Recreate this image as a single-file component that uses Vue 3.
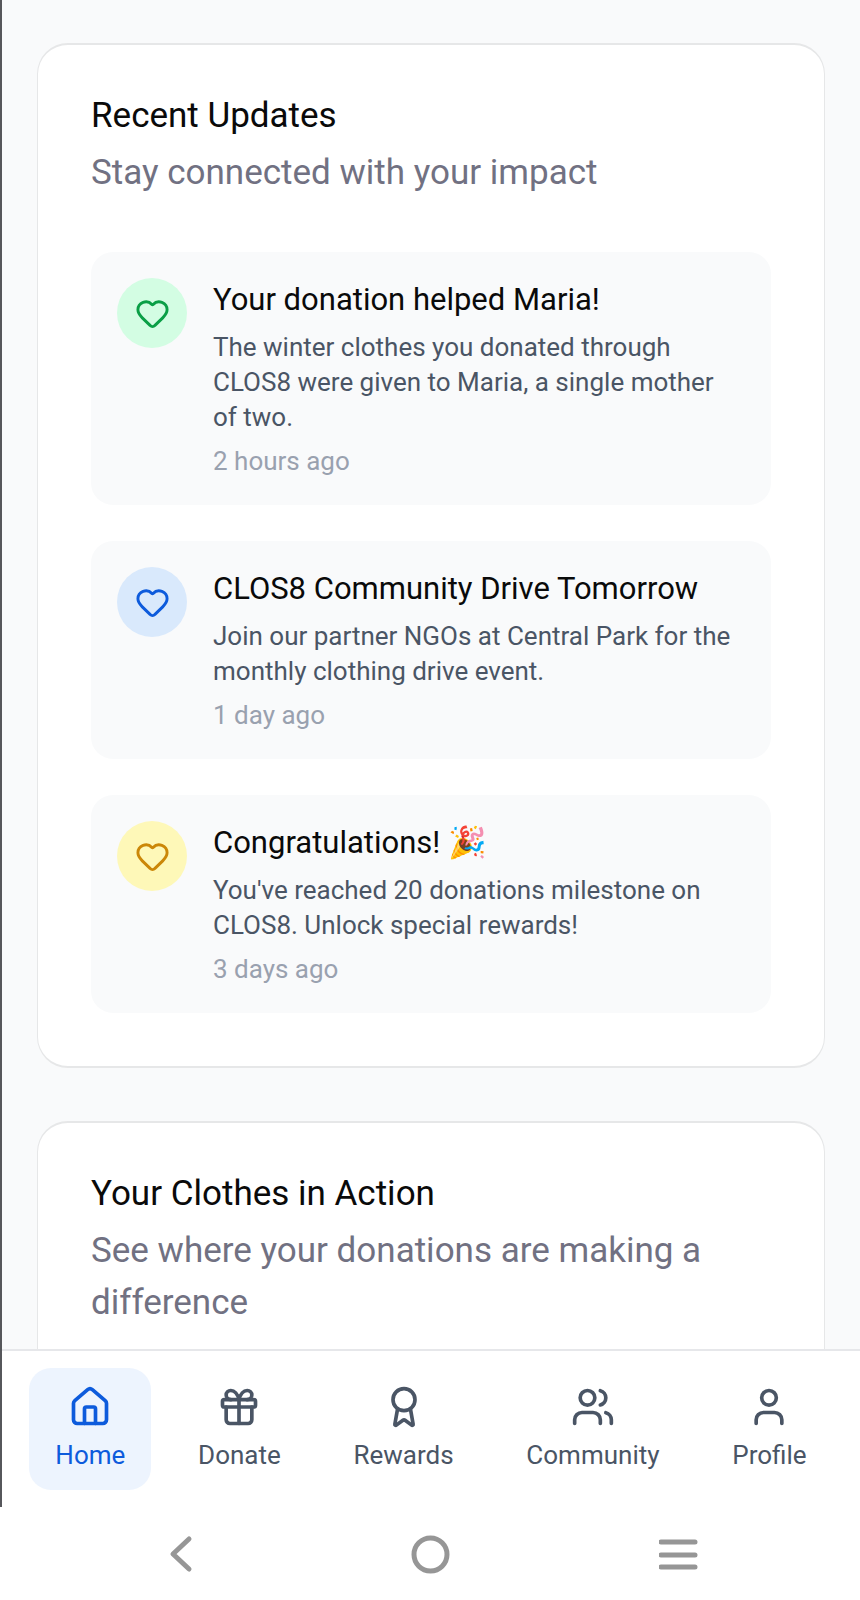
<script setup>
import { ref } from 'vue'

const updates = [
  {
    tone: 'green',
    title: 'Your donation helped Maria!',
    text: 'The winter clothes you donated through CLOS8 were given to Maria, a single mother of two.',
    time: '2 hours ago',
  },
  {
    tone: 'blue',
    title: 'CLOS8 Community Drive Tomorrow',
    text: 'Join our partner NGOs at Central Park for the monthly clothing drive event.',
    time: '1 day ago',
  },
  {
    tone: 'yellow',
    title: 'Congratulations! 🎉',
    text: "You've reached 20 donations milestone on CLOS8. Unlock special rewards!",
    time: '3 days ago',
  },
]

const tabs = [
  {
    label: 'Home',
    paths: [
      'M15 21v-8a1 1 0 0 0-1-1h-4a1 1 0 0 0-1 1v8',
      'M3 10a2 2 0 0 1 .709-1.528l7-5.999a2 2 0 0 1 2.582 0l7 5.999A2 2 0 0 1 21 10v9a2 2 0 0 1-2 2H5a2 2 0 0 1-2-2z',
    ],
  },
  {
    label: 'Donate',
    paths: [
      'M4 8h16a1 1 0 0 1 1 1v2a1 1 0 0 1-1 1H4a1 1 0 0 1-1-1V9a1 1 0 0 1 1-1z',
      'M12 8v13',
      'M19 12v7a2 2 0 0 1-2 2H7a2 2 0 0 1-2-2v-7',
      'M7.5 8a2.5 2.5 0 0 1 0-5A4.8 8 0 0 1 12 8a4.8 8 0 0 1 4.5-5 2.5 2.5 0 0 1 0 5',
    ],
  },
  {
    label: 'Rewards',
    paths: [
      'm15.477 12.89 1.515 8.526a.5.5 0 0 1-.81.47l-3.58-2.687a1 1 0 0 0-1.197 0l-3.586 2.686a.5.5 0 0 1-.81-.469l1.514-8.526',
    ],
    circle: { cx: 12, cy: 8, r: 6 },
  },
  {
    label: 'Community',
    paths: [
      'M16 21v-2a4 4 0 0 0-4-4H6a4 4 0 0 0-4 4v2',
      'M16 3.128a4 4 0 0 1 0 7.744',
      'M22 21v-2a4 4 0 0 0-3-3.87',
    ],
    circle: { cx: 9, cy: 7, r: 4 },
  },
  {
    label: 'Profile',
    paths: ['M19 21v-2a4 4 0 0 0-4-4H9a4 4 0 0 0-4 4v2'],
    circle: { cx: 12, cy: 7, r: 4 },
  },
]

const active = ref('Home')
</script>

<template>
  <div class="screen">
    <div class="app">
      <main class="content">
        <section class="card">
          <header class="card-head">
            <h2>Recent Updates</h2>
            <p>Stay connected with your impact</p>
          </header>
          <ul class="updates">
            <li v-for="u in updates" :key="u.title" class="update">
              <span class="badge" :class="u.tone">
                <svg class="heart" viewBox="0 0 24 24" aria-hidden="true">
                  <path d="M2 9.5a5.5 5.5 0 0 1 9.591-3.676.56.56 0 0 0 .818 0A5.49 5.49 0 0 1 22 9.5c0 2.29-1.5 4-3 5.5l-5.492 5.313a2 2 0 0 1-3 .019L5 15c-1.5-1.5-3-3.2-3-5.5" />
                </svg>
              </span>
              <div class="body">
                <h3>{{ u.title }}</h3>
                <p class="text">{{ u.text }}</p>
                <p class="time">{{ u.time }}</p>
              </div>
            </li>
          </ul>
        </section>

        <section class="card">
          <header class="card-head">
            <h2>Your Clothes in Action</h2>
            <p>See where your donations are making a difference</p>
          </header>
        </section>
      </main>

      <nav class="tabs" aria-label="Main">
        <button
          v-for="t in tabs"
          :key="t.label"
          type="button"
          class="tab"
          :class="{ active: active === t.label }"
          @click="active = t.label"
        >
          <svg class="tab-icon" viewBox="0 0 24 24" aria-hidden="true">
            <circle v-if="t.circle" v-bind="t.circle" />
            <path v-for="d in t.paths" :key="d" :d="d" />
          </svg>
          <span>{{ t.label }}</span>
        </button>
      </nav>
    </div>

    <footer class="system">
      <button type="button" aria-label="Back">
        <svg viewBox="0 0 40 40"><path d="M28 5 12 20l16 15" /></svg>
      </button>
      <button type="button" aria-label="Home screen">
        <svg viewBox="0 0 40 40"><circle cx="20.500" cy="20.500" r="16.500" /></svg>
      </button>
      <button type="button" aria-label="Recent apps">
        <svg viewBox="0 0 40 40"><path d="M2 8h34M2 21h34M2 33h34" /></svg>
      </button>
    </footer>
  </div>
</template>

<style>
body {
  margin: 0;
  background: #fff;
}
</style>

<style scoped>
.screen {
  display: flex;
  flex-direction: column;
  height: 100vh;
  background: #fff;
  font-family: Roboto, "Liberation Sans", sans-serif;
  color: #0a0a0a;
}

h2,
h3,
p,
ul {
  margin: 0;
  padding: 0;
  font-weight: 400;
}

button {
  margin: 0;
  border: 0;
  background: none;
  font: inherit;
  color: inherit;
  cursor: pointer;
}

svg {
  display: block;
  fill: none;
  stroke: currentColor;
  stroke-width: 2;
  stroke-linecap: round;
  stroke-linejoin: round;
}

.app {
  flex: 1;
  min-height: 0;
  display: flex;
  flex-direction: column;
  border-left: 2px solid #56575b;
}

.content {
  flex: 1;
  min-height: 0;
  overflow-y: auto;
  scrollbar-width: none;
  display: flex;
  flex-direction: column;
  gap: 53px;
  padding: 43px 35px;
  background: #f9fafb;
}

.card {
  flex: none;
  display: flex;
  flex-direction: column;
  gap: 53px;
  padding: 53px;
  border: solid #e6e7e8;
  border-width: 2px 1px;
  border-radius: 31px;
  background: #fff;
}

.card-head {
  display: flex;
  flex-direction: column;
  gap: 14px;
}

.card-head h2 {
  font-size: 35px;
  line-height: 35px;
}

.card-head p {
  font-size: 35px;
  line-height: 52px;
  color: #717182;
}

.updates {
  display: flex;
  flex-direction: column;
  gap: 36px;
  list-style: none;
}

.update {
  display: flex;
  align-items: flex-start;
  gap: 26px;
  padding: 26px 35px 26px 26px;
  border-radius: 22px;
  background: #f9fafb;
}

.badge {
  flex: none;
  display: flex;
  align-items: center;
  justify-content: center;
  width: 70px;
  height: 70px;
  border-radius: 50%;
}

.heart {
  width: 35px;
  height: 35px;
}

.green {
  background: #d3fde3;
  color: #0a9f46;
}

.blue {
  background: #d9e9fc;
  color: #0d5bdc;
}

.yellow {
  background: #fef8b8;
  color: #cb8708;
}

.body {
  flex: 1;
  min-width: 0;
}

.body h3 {
  font-size: 31px;
  line-height: 44px;
}

.text {
  margin-top: 8px;
  font-size: 26px;
  line-height: 35px;
  color: #4a5565;
}

.time {
  margin-top: 9px;
  font-size: 26px;
  line-height: 35px;
  color: #99a1af;
}

.tabs {
  display: flex;
  justify-content: space-around;
  padding: 17px;
  border-top: 2px solid #e6e7ea;
  background: #fff;
}

.tab {
  display: flex;
  flex-direction: column;
  align-items: center;
  gap: 9px;
  padding: 17px 26px;
  border-radius: 22px;
  font-size: 26px;
  line-height: 35px;
  color: #4a5565;
}

.tab.active {
  background: #edf4fe;
  color: #0d5bdc;
}

.tab-icon {
  width: 44px;
  height: 44px;
}

.system {
  display: grid;
  grid-template-columns: repeat(3, 1fr);
  align-items: center;
  justify-items: center;
  height: 93px;
  padding: 0 56px;
  color: #969696;
}

.system button {
  padding: 0;
}

.system svg {
  width: 40px;
  height: 40px;
  stroke-width: 5;
}
</style>
